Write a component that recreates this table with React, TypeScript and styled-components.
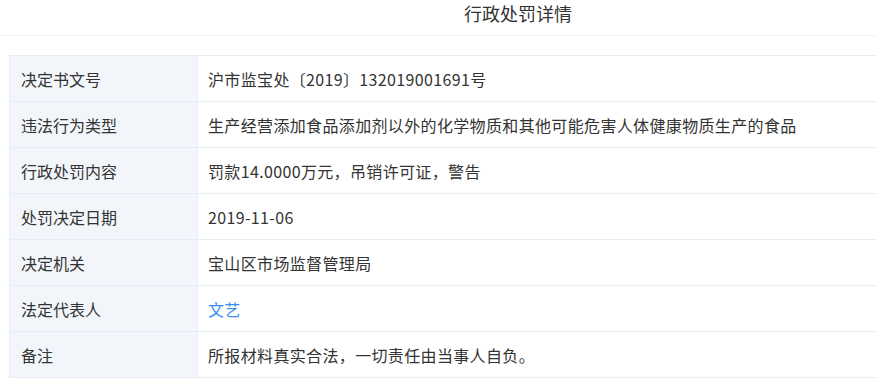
import React from 'react';
import styled, { createGlobalStyle } from 'styled-components';

const GlobalStyle = createGlobalStyle`
  html, body {
    margin: 0;
    padding: 0;
    background: #ffffff;
    overflow: hidden;
  }
  body {
    font-family: "Noto Sans CJK SC", "Noto Sans", "Liberation Sans", sans-serif;
  }
`;

const Page = styled.div`
  width: 1036px;
  display: flex;
  flex-direction: column;
`;

const Header = styled.header`
  height: 35px;
  display: flex;
  align-items: center;
  justify-content: center;
  border-bottom: 1px solid #f2f3f5;
`;

const Title = styled.h1`
  margin: -10px 0 0;
  font-size: 18px;
  font-weight: 400;
  color: #333333;
  line-height: 26px;
`;

const Content = styled.main`
  padding: 19px 9px 0;
`;

const Table = styled.table`
  width: 100%;
  border-collapse: collapse;
  table-layout: fixed;
  border: 1px solid #e7edf4;
`;

const Row = styled.tr`
  height: 46px;
  border-bottom: 1px solid #e7edf4;
`;

const Label = styled.th`
  box-sizing: border-box;
  width: 188px;
  padding: 0 11px;
  text-align: left;
  font-weight: 400;
  font-size: 16px;
  color: #333333;
  background: #f2f6fa;
  border-right: 1px solid #e7edf4;
`;

const Value = styled.td<{ $link?: boolean }>`
  padding: 0 10px;
  font-size: 16px;
  letter-spacing: 0.35px;
  color: ${(p) => (p.$link ? '#3b8cf0' : '#333333')};
  white-space: nowrap;
`;

const rows: { label: string; value: string; link?: boolean }[] = [
  { label: '决定书文号', value: '沪市监宝处〔2019〕132019001691号' },
  { label: '违法行为类型', value: '生产经营添加食品添加剂以外的化学物质和其他可能危害人体健康物质生产的食品' },
  { label: '行政处罚内容', value: '罚款14.0000万元，吊销许可证，警告' },
  { label: '处罚决定日期', value: '2019-11-06' },
  { label: '决定机关', value: '宝山区市场监督管理局' },
  { label: '法定代表人', value: '文艺', link: true },
  { label: '备注', value: '所报材料真实合法，一切责任由当事人自负。' },
];

const App: React.FC = () => {
  return (
    <Page>
      <GlobalStyle />
      <Header>
        <Title>行政处罚详情</Title>
      </Header>
      <Content>
        <Table>
          <tbody>
            {rows.map((r) => (
              <Row key={r.label}>
                <Label>{r.label}</Label>
                <Value $link={r.link}>{r.value}</Value>
              </Row>
            ))}
          </tbody>
        </Table>
      </Content>
    </Page>
  );
};

export default App;
